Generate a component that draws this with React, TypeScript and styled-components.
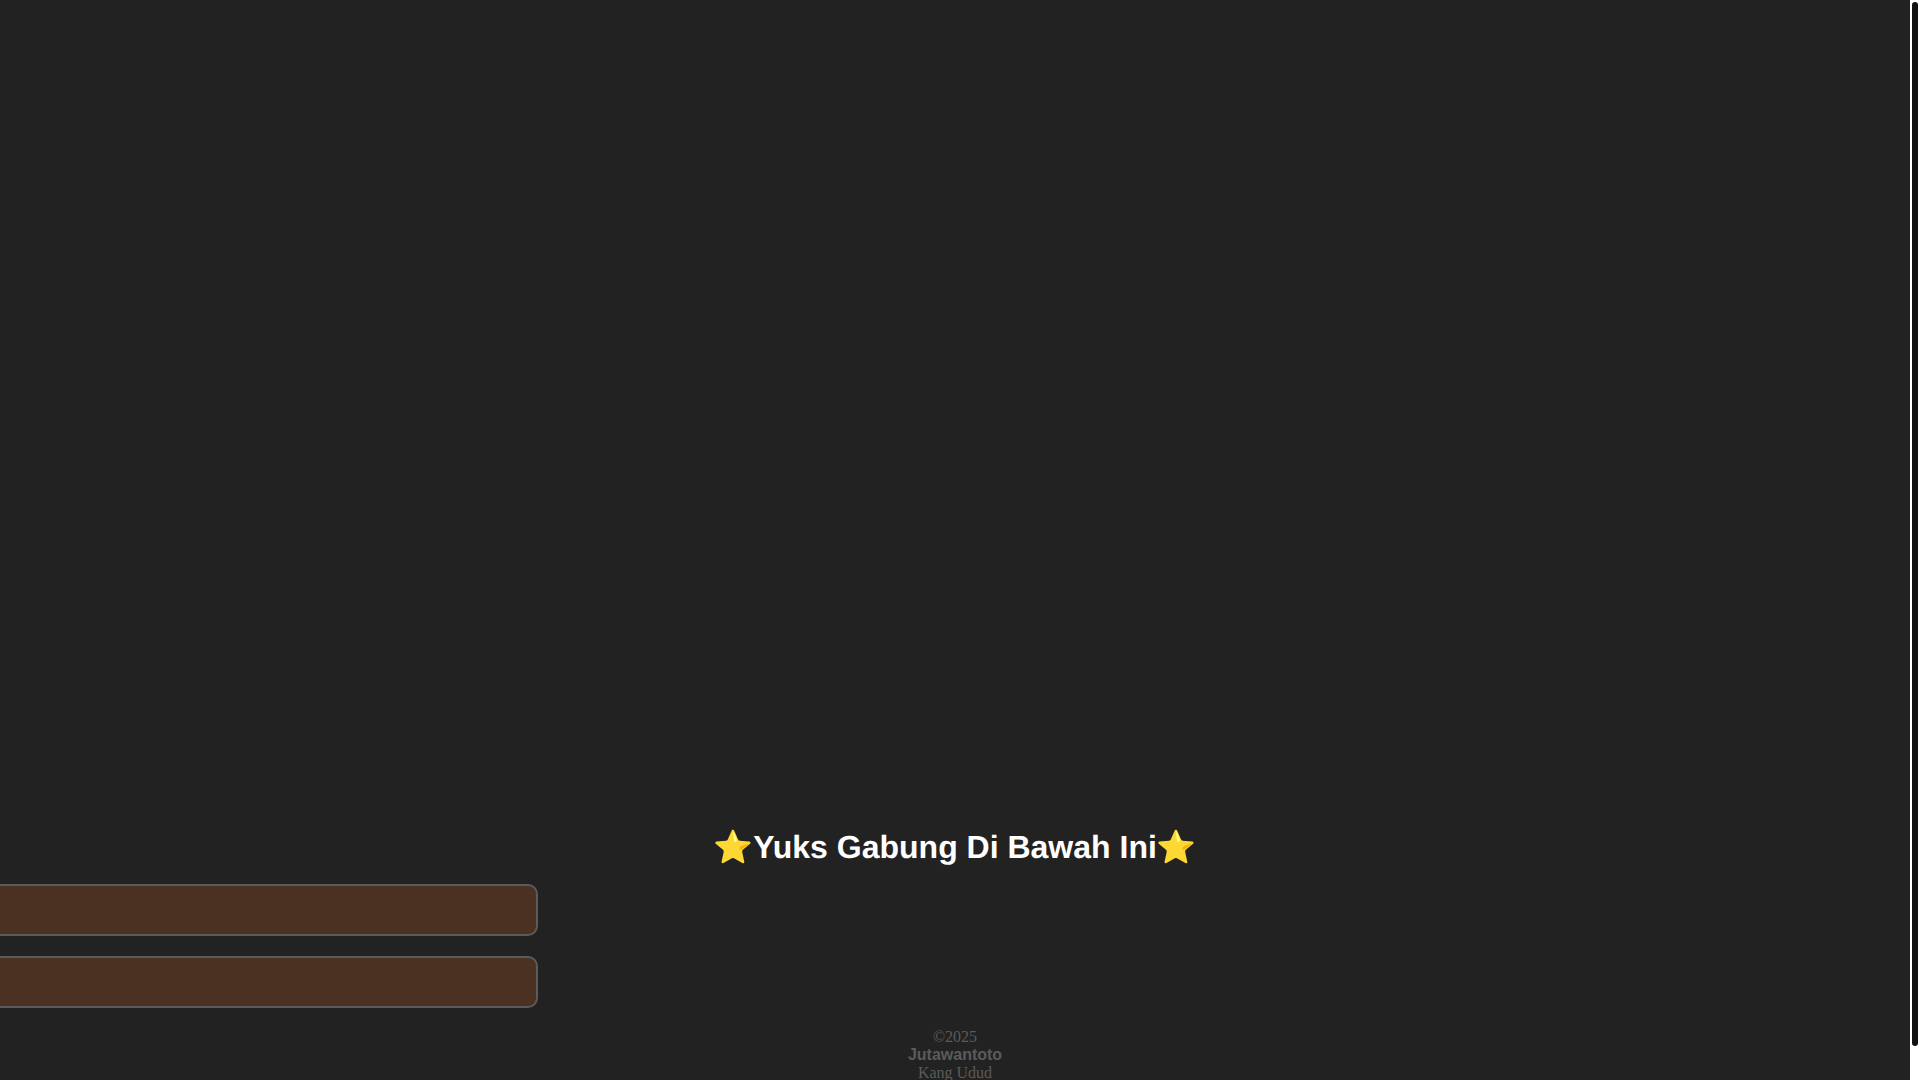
import React from "react";
import styled, { createGlobalStyle } from "styled-components";

const GlobalStyle = createGlobalStyle`
  body {
    margin: 0;
    background: #222222;
  }
`;

const Shell = styled.div`
  display: flex;
  height: 100vh;
  overflow: hidden;
  background: #222222;
  font-family: "Liberation Serif", serif;
  font-size: 16px;
`;

const Page = styled.div`
  flex: 1;
  min-width: 0;
  overflow-x: hidden;
  overflow-y: auto;
  scrollbar-width: none;
`;

const ScrollTrack = styled.div`
  box-sizing: border-box;
  flex: none;
  width: 10px;
  padding: 2px;
  background: #ffffff;
`;

const ScrollThumb = styled.div`
  height: 97%;
  border-radius: 3px;
  background: #111111;
`;

const Banner = styled.header`
  height: 828px;
`;

const Title = styled.h1`
  margin: 0;
  padding-bottom: 18px;
  color: #ffffff;
  font-family: "Liberation Sans", "Noto Color Emoji", sans-serif;
  font-size: 32px;
  font-weight: bold;
  line-height: 38px;
  text-align: center;
  text-rendering: geometricPrecision;
`;

const Actions = styled.nav`
  display: flex;
  flex-direction: column;
  gap: 20px;
  margin-left: -12px;
`;

const ActionLink = styled.a`
  box-sizing: border-box;
  width: 550px;
  height: 52px;
  border: 2px solid #5b5b5b;
  border-radius: 10px;
  background: #4b3121;
`;

const Footer = styled.footer`
  padding: 20px 0 32px;
  color: #5b5b5b;
  line-height: 18px;
  text-align: center;
`;

const Brand = styled.strong`
  display: block;
  font-family: "Liberation Sans", sans-serif;
`;

export default function App() {
  return (
    <>
      <GlobalStyle />
      <Shell>
        <Page>
          <Banner />
          <main>
            <Title>⭐Yuks Gabung Di Bawah Ini⭐</Title>
            <Actions>
              <ActionLink href="#daftar" aria-label="Daftar" />
              <ActionLink href="#login" aria-label="Login" />
            </Actions>
          </main>
          <Footer>
            ©2025
            <Brand>Jutawantoto</Brand>
            Kang Udud
          </Footer>
        </Page>
        <ScrollTrack aria-hidden="true">
          <ScrollThumb />
        </ScrollTrack>
      </Shell>
    </>
  );
}
